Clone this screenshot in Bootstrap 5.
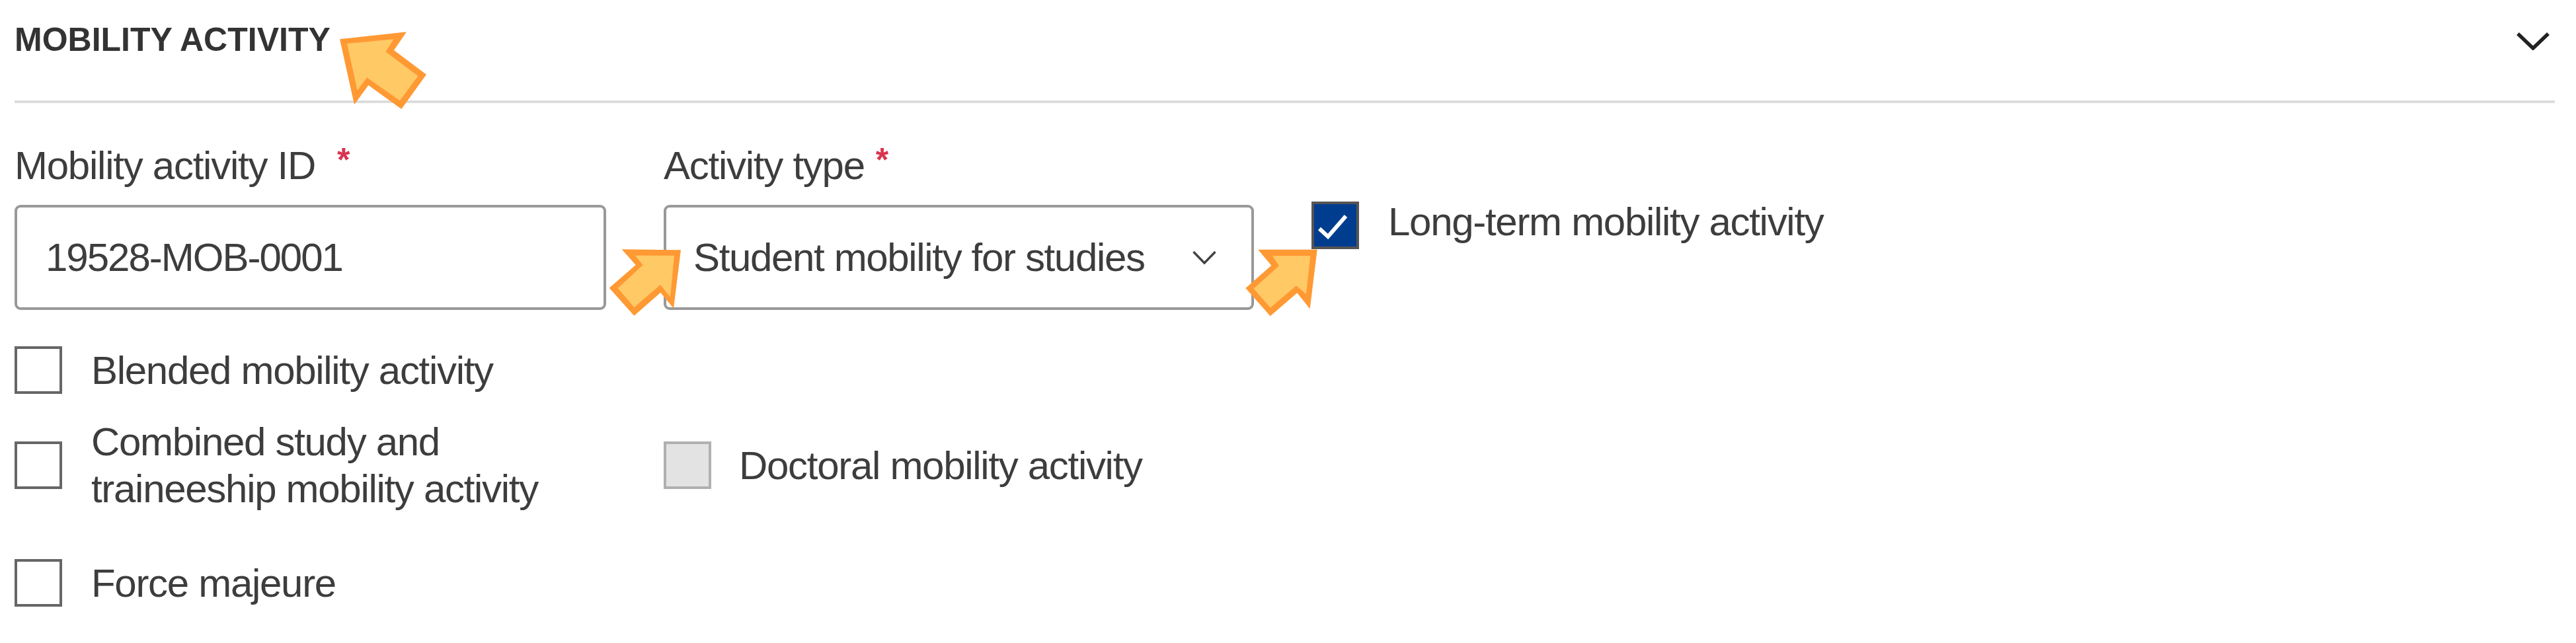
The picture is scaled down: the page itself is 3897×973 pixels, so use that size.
<!DOCTYPE html>
<html lang="en">
<head>
<meta charset="utf-8">
<title>Mobility activity</title>
<link href="https://cdn.jsdelivr.net/npm/bootstrap@5.3.0/dist/css/bootstrap.min.css" rel="stylesheet">
<style>
html, body { margin: 0; background: #fff; }
body { font-family: "Liberation Sans", Arial, sans-serif; color: #3d3d3d; }
.stage { position: relative; height: 973px; overflow: hidden; }
.sheet { padding: 0 32px 0 22px; filter: blur(.7px); }
.sec-head { height: 156px; border-bottom: 4px solid #ddd; padding-right: 8px; }
.sec-title { font-size: 50px; font-weight: 700; line-height: 120px; letter-spacing: 0; color: #333; margin: 0; }
.sec-chev { width: 50px; height: 28px; margin-top: 48px; display: block; }
.field-row { display: flex; gap: 87px; }
.field-col { width: 893px; flex: none; }
.field-col-wide { width: 895px; }
.row-fields { margin-top: 59px; }
.fld-label { display: block; font-size: 60px; line-height: 72px; letter-spacing: -1.25px; margin: 0 0 23px; color: #3d3d3d; }
.req { color: #d9344f; font-size: 50px; font-weight: 700; letter-spacing: 0; vertical-align: 12px; line-height: 0; }
.req-gap { margin-left: 33px; }
.req-near { margin-left: 17px; }
.form-control.fld-box, .form-select.fld-box {
  height: 159px; border: 4px solid #999; border-radius: 9px; color: #3d3d3d;
  font-size: 60px; line-height: 72px; padding: 0 90px 0 43px; box-shadow: none;
}
.form-control.fld-box { letter-spacing: -2px; }
.form-select.fld-box {
  letter-spacing: -1.35px; padding-left: 41px;
  background-size: 36px 21px; background-position: right 53px center; background-repeat: no-repeat;
  background-image: url("data:image/svg+xml,%3csvg xmlns='http://www.w3.org/2000/svg' viewBox='0 0 36 21'%3e%3cpath fill='none' stroke='%23444' stroke-width='3.5' d='M1.5 2 18 19 34.5 2'/%3e%3c/svg%3e");
}
.chk-line { display: flex; align-items: center; gap: 44px; }
.form-check-input.chk-box {
  width: 72px; height: 72px; margin: 0; flex: none; border: 4px solid #666; border-radius: 0; background-color: #fff; box-shadow: none;
}
.form-check-input.chk-box:checked {
  background-color: #003d8f; border-color: #555; background-size: 64px 64px; background-position: center;
  background-image: url("data:image/svg+xml,%3csvg xmlns='http://www.w3.org/2000/svg' viewBox='0 0 64 64'%3e%3cpath fill='none' stroke='%23fff' stroke-width='6' d='M8 37 21 49 48 18'/%3e%3c/svg%3e");
}
.form-check-input.chk-box:disabled { opacity: 1; background-color: #e3e3e3; border-color: #b0b0b0; }
.chk-text { font-size: 60px; line-height: 71px; letter-spacing: -1.3px; margin: 0; color: #3d3d3d; opacity: 1 !important; }
.chk-longterm { margin-top: 85px; align-items: flex-start; }
.form-check-input.chk-box.chk-drop { margin-top: 5px; }
.chk-blended { margin-top: 55px; }
.chk-combo { margin-top: 37px; }
.chk-tight { gap: 42px; }
.chk-force { margin-top: 71px; }
.ptr { position: absolute; display: block; }
.ptr-a { left: 500px; top: 30px; width: 160px; height: 150px; }
.ptr-b { left: 900px; top: 350px; width: 160px; height: 150px; }
.ptr-c { left: 1870px; top: 280px; width: 220px; height: 200px; }
</style>
</head>
<body>
<div class="stage">
  <div class="sheet">
    <div class="sec-head d-flex justify-content-between align-items-start">
      <h2 class="sec-title text-uppercase">Mobility activity</h2>
      <svg class="sec-chev" viewBox="0 0 50 28" aria-hidden="true"><path d="M2 3 25 25 48 3" fill="none" stroke="#222" stroke-width="5.5"/></svg>
    </div>
    <form>
      <div class="field-row row-fields">
        <div class="field-col field-col-wide">
          <label class="fld-label" for="mid">Mobility activity ID<span class="req req-gap">*</span></label>
          <input id="mid" class="form-control fld-box" type="text" value="19528-MOB-0001">
        </div>
        <div class="field-col">
          <label class="fld-label" for="atype">Activity type<span class="req req-near">*</span></label>
          <select id="atype" class="form-select fld-box"><option>Student mobility for studies</option></select>
        </div>
        <div class="chk-line chk-longterm">
          <input id="c0" class="form-check-input chk-box chk-drop" type="checkbox" checked>
          <label class="chk-text" for="c0">Long-term mobility activity</label>
        </div>
      </div>
      <div class="chk-line chk-blended">
        <input id="c1" class="form-check-input chk-box" type="checkbox">
        <label class="chk-text" for="c1">Blended mobility activity</label>
      </div>
      <div class="field-row chk-combo">
        <div class="field-col field-col-wide chk-line">
          <input id="c2" class="form-check-input chk-box" type="checkbox">
          <label class="chk-text" for="c2">Combined study and<br>traineeship mobility activity</label>
        </div>
        <div class="field-col chk-line chk-tight">
          <input id="c3" class="form-check-input chk-box" type="checkbox" disabled>
          <label class="chk-text" for="c3">Doctoral mobility activity</label>
        </div>
      </div>
      <div class="chk-line chk-force">
        <input id="c4" class="form-check-input chk-box" type="checkbox">
        <label class="chk-text" for="c4">Force majeure</label>
      </div>
    </form>
  </div>
  <svg class="ptr ptr-a" viewBox="0 0 480 450" aria-hidden="true">
    <polygon fill="#ff9933" points="42,88 345,55 288,138 435,248 322,405 172,297 108,385"/>
    <polygon fill="#ffc966" points="75,108 287,88 250,145 397,255 315,367 165,262 122,320"/>
  </svg>
  <svg class="ptr ptr-b" viewBox="0 0 480 450" aria-hidden="true">
    <polygon fill="#ff9933" points="122,82 390,85 357,350 298,278 178,383 65,257 185,153"/>
    <polygon fill="#ffc966" points="183,110 360,110 342,298 297,243 178,345 104,258 218,153"/>
  </svg>
  <svg class="ptr ptr-c" viewBox="0 0 660 600" aria-hidden="true">
    <polygon fill="#ff9933" points="100,293 368,293 335,562 277,490 155,595 43,468 160,365"/>
    <polygon fill="#ffc966" points="165,322 337,322 318,495 273,457 155,557 80,470 195,367"/>
  </svg>
</div>
<script src="https://cdn.jsdelivr.net/npm/bootstrap@5.3.0/dist/js/bootstrap.bundle.min.js"></script>
</body>
</html>
